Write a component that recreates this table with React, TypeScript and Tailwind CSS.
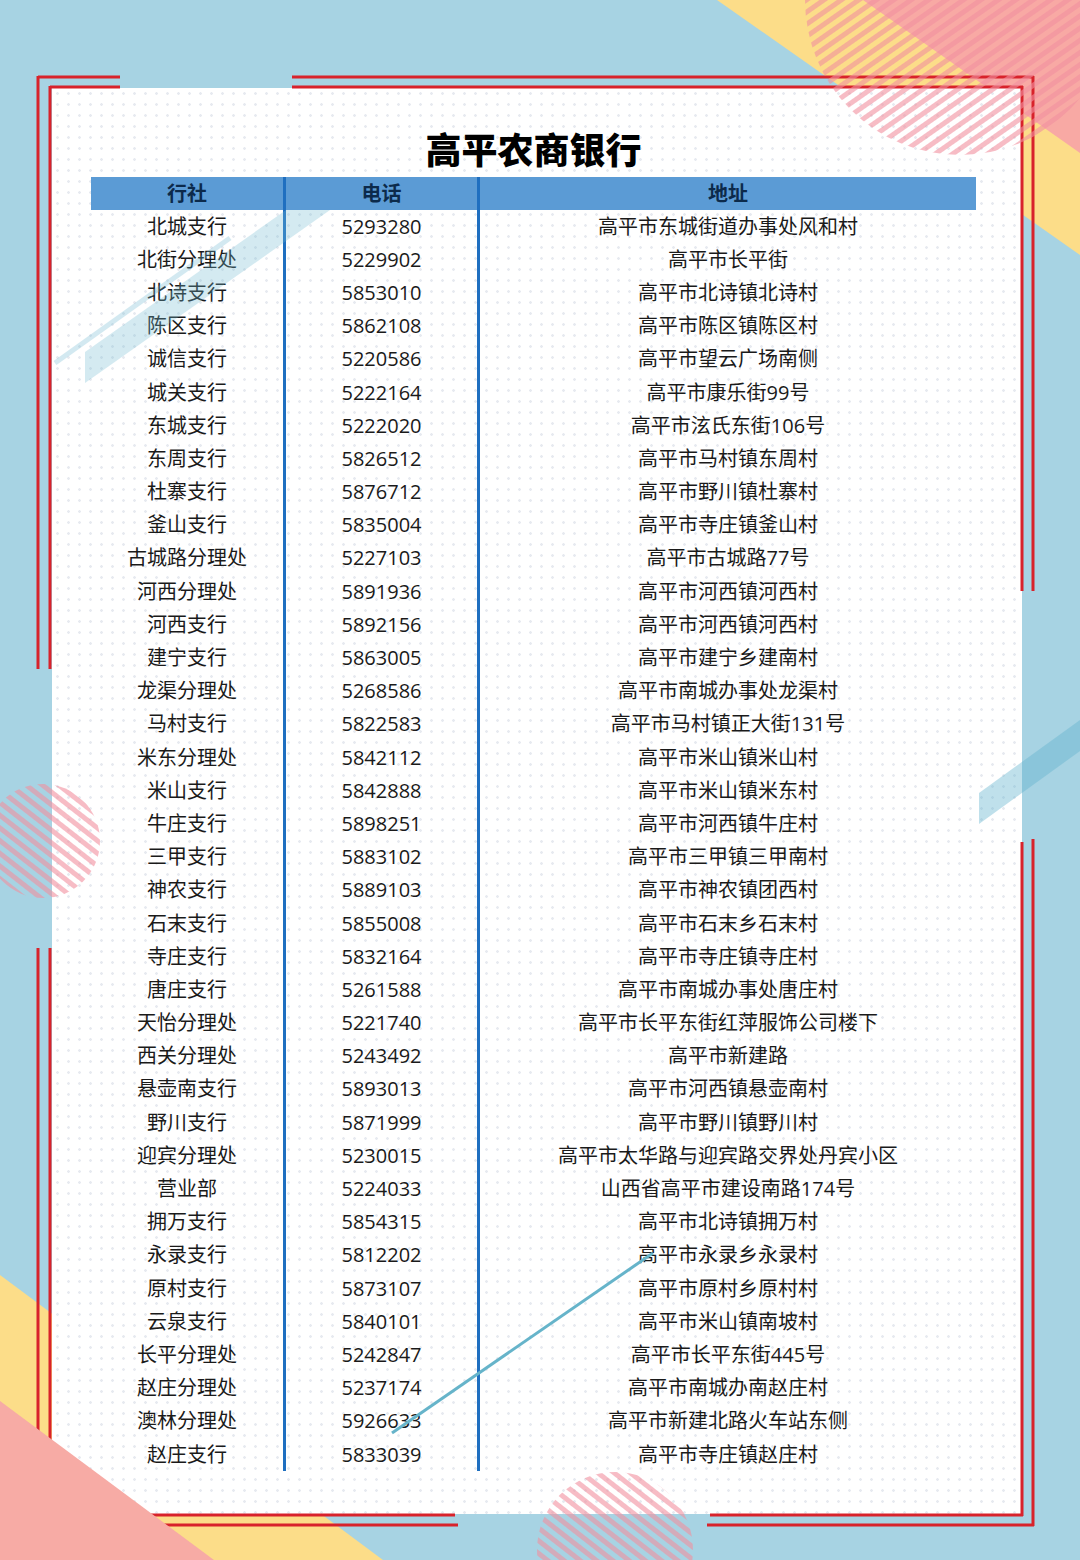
import React from "react"

type Branch = [string, string, string]

const branches: Branch[] = [
  ["北城支行", "5293280", "高平市东城街道办事处风和村"],
  ["北街分理处", "5229902", "高平市长平街"],
  ["北诗支行", "5853010", "高平市北诗镇北诗村"],
  ["陈区支行", "5862108", "高平市陈区镇陈区村"],
  ["诚信支行", "5220586", "高平市望云广场南侧"],
  ["城关支行", "5222164", "高平市康乐街99号"],
  ["东城支行", "5222020", "高平市泫氏东街106号"],
  ["东周支行", "5826512", "高平市马村镇东周村"],
  ["杜寨支行", "5876712", "高平市野川镇杜寨村"],
  ["釜山支行", "5835004", "高平市寺庄镇釜山村"],
  ["古城路分理处", "5227103", "高平市古城路77号"],
  ["河西分理处", "5891936", "高平市河西镇河西村"],
  ["河西支行", "5892156", "高平市河西镇河西村"],
  ["建宁支行", "5863005", "高平市建宁乡建南村"],
  ["龙渠分理处", "5268586", "高平市南城办事处龙渠村"],
  ["马村支行", "5822583", "高平市马村镇正大街131号"],
  ["米东分理处", "5842112", "高平市米山镇米山村"],
  ["米山支行", "5842888", "高平市米山镇米东村"],
  ["牛庄支行", "5898251", "高平市河西镇牛庄村"],
  ["三甲支行", "5883102", "高平市三甲镇三甲南村"],
  ["神农支行", "5889103", "高平市神农镇团西村"],
  ["石末支行", "5855008", "高平市石末乡石末村"],
  ["寺庄支行", "5832164", "高平市寺庄镇寺庄村"],
  ["唐庄支行", "5261588", "高平市南城办事处唐庄村"],
  ["天怡分理处", "5221740", "高平市长平东街红萍服饰公司楼下"],
  ["西关分理处", "5243492", "高平市新建路"],
  ["悬壶南支行", "5893013", "高平市河西镇悬壶南村"],
  ["野川支行", "5871999", "高平市野川镇野川村"],
  ["迎宾分理处", "5230015", "高平市太华路与迎宾路交界处丹宾小区"],
  ["营业部", "5224033", "山西省高平市建设南路174号"],
  ["拥万支行", "5854315", "高平市北诗镇拥万村"],
  ["永录支行", "5812202", "高平市永录乡永录村"],
  ["原村支行", "5873107", "高平市原村乡原村村"],
  ["云泉支行", "5840101", "高平市米山镇南坡村"],
  ["长平分理处", "5242847", "高平市长平东街445号"],
  ["赵庄分理处", "5237174", "高平市南城办南赵庄村"],
  ["澳林分理处", "5926633", "高平市新建北路火车站东侧"],
  ["赵庄支行", "5833039", "高平市寺庄镇赵庄村"],
]

const RED = "#d8222b"

// shapes that sit behind the white sheet
function BackShapes() {
  return (
    <svg className="absolute inset-0 z-0" width="1080" height="1560" viewBox="0 0 1080 1560">
      <polygon points="717,0 1080,0 1080,255" fill="#fcdd89" />
      <polygon points="863,0 1080,0 1080,153" fill="#f8a9a4" />
      <polygon points="0,1275 383,1560 0,1560" fill="#fcdd89" />
    </svg>
  )
}

// frame lines, striped circles and the see-through bands on top of the sheet
function FrontShapes() {
  const lines: [number, number, number, number][] = [
    // outer frame
    [38, 77, 120, 77], [292, 77, 1034, 77],
    [38, 76, 38, 669], [38, 948, 38, 1526],
    [1033, 76, 1033, 591], [1033, 839, 1033, 1526],
    [37, 1525, 458, 1525], [707, 1525, 1034, 1525],
    // inner frame
    [50, 87, 120, 87], [292, 87, 1023, 87],
    [50, 86, 50, 669], [50, 948, 50, 1516],
    [1022, 86, 1022, 591], [1022, 842, 1022, 1516],
    [49, 1515, 455, 1515], [710, 1515, 1023, 1515],
  ]
  return (
    <svg className="pointer-events-none absolute inset-0 z-20" width="1080" height="1560" viewBox="0 0 1080 1560">
      <defs>
        <pattern id="down" width="10" height="10" patternUnits="userSpaceOnUse" patternTransform="rotate(38)">
          <rect width="10" height="5" fill="#f1909f" />
        </pattern>
        <pattern id="up" width="10" height="10" patternUnits="userSpaceOnUse" patternTransform="rotate(-35)">
          <rect width="10" height="5" fill="#f1909f" />
        </pattern>
      </defs>

      <polygon points="85,352 286,210 330,210 85,383" fill="#6fb9d2" opacity="0.3" />
      <line x1="55" y1="363" x2="230" y2="238" stroke="#6fb9d2" strokeWidth="5" opacity="0.3" />
      <polygon points="979,793 1080,720 1080,751 979,824" fill="#5fb2cd" opacity="0.4" />

      {lines.map(([x1, y1, x2, y2], i) => (
        <line key={i} x1={x1} y1={y1} x2={x2} y2={y2} stroke={RED} strokeWidth="3" />
      ))}

      <circle cx="960" cy="0" r="155" fill="url(#up)" opacity="0.6" />
      <circle cx="43" cy="841" r="57" fill="url(#down)" opacity="0.6" />
      <circle cx="615" cy="1550" r="78" fill="url(#down)" opacity="0.6" />

      <line x1="392" y1="1433" x2="653" y2="1253" stroke="#66b4ca" strokeWidth="3" />
      <polygon points="0,1401 214,1560 0,1560" fill="#f7aba5" />
    </svg>
  )
}

function Column({ title, values, className }: { title: string; values: string[]; className: string }) {
  return (
    <div className={`flex flex-col ${className}`}>
      <div className="flex h-[33px] items-center justify-center bg-[#5b9bd5] text-[20px] font-bold text-[#0c2a4b]">
        {title}
      </div>
      {values.map((v, i) => (
        <div key={i} className="flex h-[33.2px] items-center justify-center whitespace-nowrap text-[20px] text-[#1a1a1a]">
          {v}
        </div>
      ))}
    </div>
  )
}

export default function App() {
  return (
    <div
      className="relative h-[1560px] w-[1080px] overflow-hidden bg-[#a7d3e3]"
      style={{ fontFamily: '"Open Sans", "Noto Sans CJK SC", sans-serif' }}
    >
      <BackShapes />

      <div className="relative z-10 ml-[52px] mt-[88px] h-[1426px] w-[970px] bg-white bg-[radial-gradient(circle,#e7eaf0_1px,transparent_1.6px)] [background-size:11px_11px]">
        <div className="ml-[39px] w-[885px]">
          <h1 className="h-[89px] pt-[41px] text-center text-[36px] font-black leading-[44px] text-black">
            高平农商银行
          </h1>
          <div className="flex">
            <Column title="行社" values={branches.map((b) => b[0])} className="w-[192px]" />
            <Column title="电话" values={branches.map((b) => b[1])} className="w-[194px] border-l-[3px] border-[#1f6fc0]" />
            <Column title="地址" values={branches.map((b) => b[2])} className="flex-1 border-l-[3px] border-[#1f6fc0]" />
          </div>
        </div>
      </div>

      <FrontShapes />
    </div>
  )
}
